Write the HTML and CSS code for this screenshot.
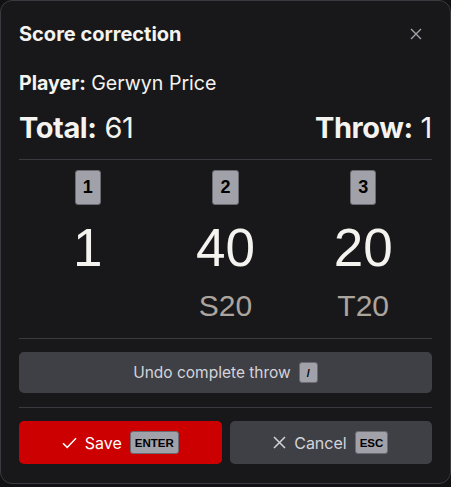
FILE: index.html
```html
<!DOCTYPE html>
<html lang="en">
<head>
<meta charset="utf-8">
<title>Score correction</title>
<link rel="stylesheet" href="styles.css">
</head>
<body>
<div class="dialog">
  <div class="header">
    <h1 class="title">Score correction</h1>
    <button class="close" aria-label="Close">
      <svg width="12" height="12" viewBox="0 0 12 12"><path d="M1 1L11 11M11 1L1 11" stroke="#a1a1aa" stroke-width="1.4" fill="none"/></svg>
    </button>
  </div>
  <div class="player"><b>Player:</b> Gerwyn Price</div>
  <div class="totals">
    <div><b>Total:</b> 61</div>
    <div><b>Throw:</b> 1</div>
  </div>
  <div class="divider"></div>
  <div class="darts">
    <div class="dart">
      <span class="key">1</span>
      <span class="score">1</span>
      <span class="field"></span>
    </div>
    <div class="dart">
      <span class="key">2</span>
      <span class="score">40</span>
      <span class="field">S20</span>
    </div>
    <div class="dart">
      <span class="key">3</span>
      <span class="score">20</span>
      <span class="field">T20</span>
    </div>
  </div>
  <div class="divider"></div>
  <button class="btn undo">Undo complete throw <span class="kbd slash">/</span></button>
  <div class="divider"></div>
  <div class="actions">
    <button class="btn save">
      <svg width="15" height="12" viewBox="0 0 15 12"><path d="M1 6.2L5.2 10.4L14 1.2" stroke="#fff" stroke-width="1.5" fill="none"/></svg>
      Save <span class="kbd">ENTER</span>
    </button>
    <button class="btn cancel">
      <svg width="13" height="13" viewBox="0 0 13 13"><path d="M1 1L12 12M12 1L1 12" stroke="#d4d4d8" stroke-width="1.5" fill="none"/></svg>
      Cancel <span class="kbd">ESC</span>
    </button>
  </div>
</div>
</body>
</html>
```

FILE: styles.css
```css
* { box-sizing: border-box; }
html, body {
  margin: 0;
  padding: 0;
  background: #111113;
}
body {
  font-family: Inter, "Noto Sans", sans-serif;
  color: #f4f3ef;
}
.dialog {
  width: 451px;
  height: 484px;
  background: #18181b;
  border: 1px solid #3a3a40;
  border-radius: 12px;
  padding: 18px 18px 0 18px;
  display: flex;
  flex-direction: column;
}
.header {
  display: flex;
  justify-content: space-between;
  align-items: center;
  height: 30px;
}
.title {
  margin: 0;
  font-size: 20px;
  font-weight: 700;
}
.close {
  background: none;
  border: 0;
  padding: 0;
  width: 24px;
  height: 24px;
  display: flex;
  align-items: center;
  justify-content: center;
  margin-right: 4px;
}
.player {
  margin-top: 20px;
  font-size: 19.6px;
  line-height: 28px;
}
.player b { font-weight: 700; }
.totals {
  margin-top: 13px;
  display: flex;
  justify-content: space-between;
  font-size: 29px;
  line-height: 36px;
  letter-spacing: -0.4px;
}
.totals b { font-weight: 700; }
.divider {
  height: 1px;
  background: #3a3a40;
  flex: none;
}
.totals + .divider { margin-top: 13px; }
.darts {
  display: grid;
  grid-template-columns: 1fr 1fr 1fr;
  padding-top: 10px;
  padding-bottom: 17px;
}
.dart {
  display: flex;
  flex-direction: column;
  align-items: center;
}
.key {
  font-family: "Liberation Sans", Arial, sans-serif;
  font-weight: 700;
  font-size: 18px;
  color: #000;
  background: #a1a1aa;
  border: 1px solid #6b6b73;
  border-radius: 3px;
  height: 35px;
  padding: 0 7px;
  display: flex;
  align-items: center;
}
.score {
  font-family: "Liberation Sans", Arial, sans-serif;
  font-size: 53px;
  line-height: 52px;
  margin-top: 17px;
  color: #f4f3ef;
}
.field {
  font-family: "Liberation Sans", Arial, sans-serif;
  font-size: 30px;
  line-height: 30px;
  height: 30px;
  margin-top: 17px;
  color: #aca59d;
}
.btn {
  font-family: Inter, "Noto Sans", sans-serif;
  border: 0;
  border-radius: 5px;
  display: flex;
  align-items: center;
  justify-content: center;
  gap: 8px;
  cursor: pointer;
}
.undo {
  margin-top: 13px;
  margin-bottom: 14px;
  height: 41px;
  background: #3f3f46;
  color: #d4d4d8;
  font-size: 15.5px;
}
.kbd {
  font-family: "Liberation Sans", Arial, sans-serif;
  font-weight: 700;
  font-size: 11.5px;
  color: #000;
  background: #a1a1aa;
  border: 1px solid #6b6b73;
  border-radius: 3px;
  height: 23px;
  padding: 0 4px;
  display: inline-flex;
  align-items: center;
}
.kbd.slash {
  height: 21px;
  padding: 0 7px;
  font-size: 11px;
}
.actions {
  margin-top: 13px;
  display: grid;
  grid-template-columns: 1fr 1fr;
  gap: 8px;
}
.save, .cancel {
  height: 43px;
  font-size: 16px;
}
.save {
  background: #cc0000;
  color: #fff;
}
.cancel {
  background: #3f3f46;
  color: #d4d4d8;
}
```
